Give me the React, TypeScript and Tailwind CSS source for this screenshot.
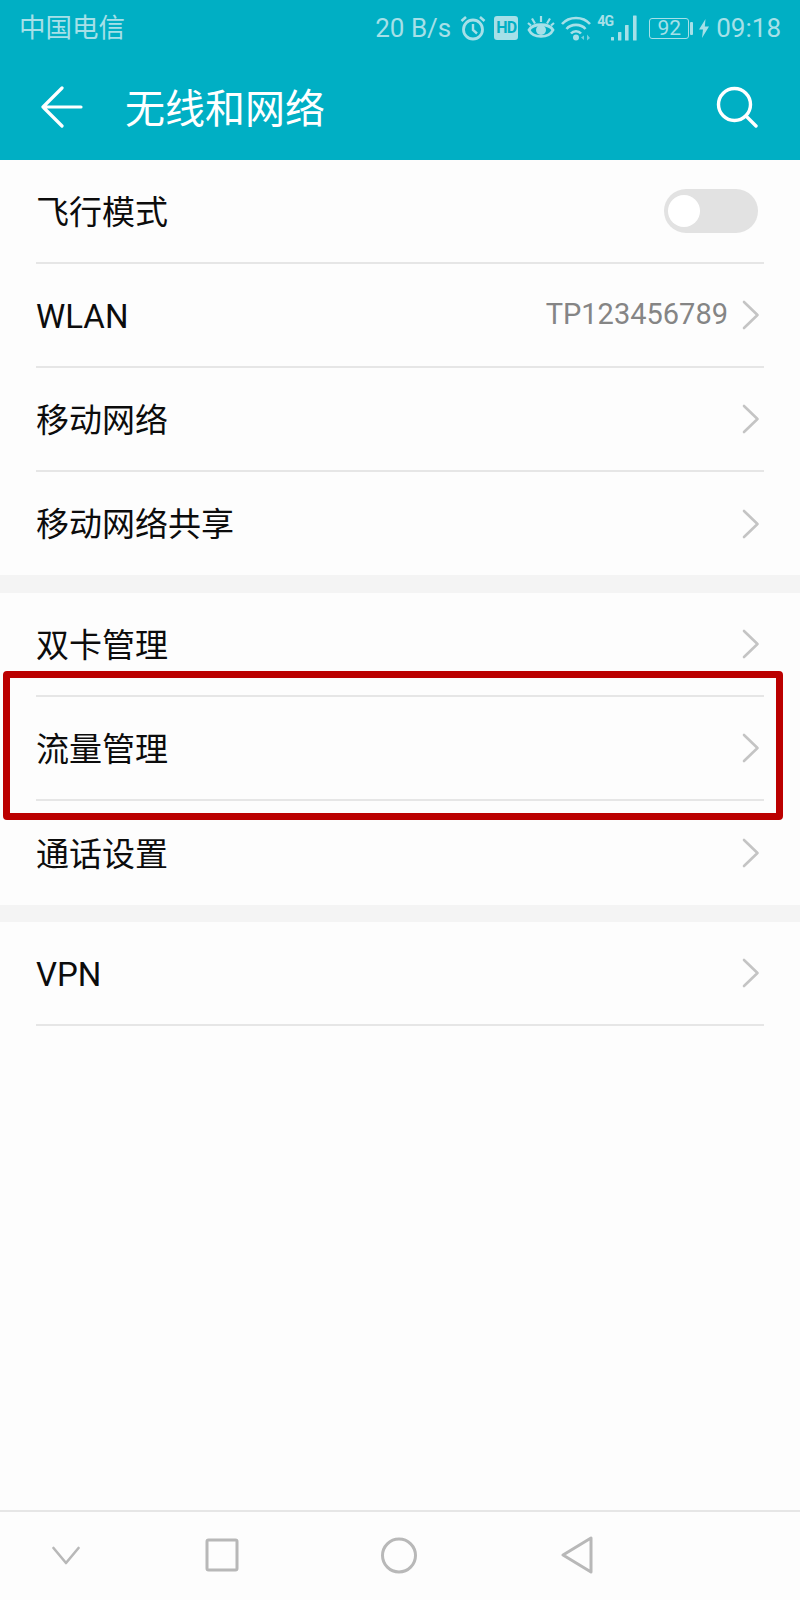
import React from 'react';

const FONT = 'font-["Roboto","Noto_Sans_CJK_SC",sans-serif]';

const Chevron = () => (
  <svg width="18" height="30" viewBox="0 0 18 30" fill="none" className="shrink-0">
    <path d="M2 2 L15.5 15 L2 28" stroke="#c4c4c4" strokeWidth="2.6" strokeLinecap="round" strokeLinejoin="round" />
  </svg>
);

const Row = ({ label, value, divider = true, short = false, children }: { label: string; value?: string; divider?: boolean; short?: boolean; children?: React.ReactNode }) => (
  <div className="pl-9 pr-9">
    <div className={`${short ? 'h-[103px]' : 'h-[104px]'} flex items-center justify-between ${divider ? 'border-b-2 border-[#e6e6e6]' : ''}`}>
      <span className="text-[33px] text-[#0c0c0c] leading-none pt-[2px]">{label}</span>
      {children ?? (
        <div className="flex items-center mr-[4px]">
          {value && <span className="text-[29px] text-[#858585] mr-[14px]">{value}</span>}
          <Chevron />
        </div>
      )}
    </div>
  </div>
);

const StatusIcons = () => (
  <div className="flex items-center">
    {/* alarm */}
    <svg width="26" height="26" viewBox="0 0 26 26" fill="none" stroke="currentColor" className="ml-[9px]">
      <circle cx="13" cy="14.5" r="9.5" strokeWidth="2.8" />
      <path d="M13 9 V15 L17 18.5" strokeWidth="2.4" />
      <path d="M1.5 6 L6 2 M24.5 6 L20 2" strokeWidth="2.6" />
    </svg>
    {/* HD */}
    <span className="ml-[8px] w-[24px] h-[24px] rounded-[3px] bg-[#a6e0e8] text-[#00afc4] text-[16px] font-bold leading-[24px] text-center tracking-tighter">HD</span>
    {/* eye */}
    <svg width="28" height="26" viewBox="0 0 28 26" fill="none" stroke="currentColor" className="ml-[9px]">
      <path d="M2 15 C6 8 22 8 26 15 C22 23.5 6 23.5 2 15 Z" strokeWidth="2.8" />
      <circle cx="14" cy="15" r="5" fill="currentColor" stroke="none" />
      <path d="M14 1 V7 M5 3.5 L8 8.5 M23 3.5 L20 8.5 M1 8 L4 10.5 M27 8 L24 10.5" strokeWidth="2.2" />
    </svg>
    {/* wifi */}
    <svg width="30" height="26" viewBox="0 0 30 26" fill="none" stroke="currentColor" className="ml-[6px]">
      <path d="M1 9 C8 1 22 1 29 9 M5.5 14 C10 8.5 20 8.5 24.5 14 M10 18.5 C12.5 15.5 17.5 15.5 20 18.5" strokeWidth="2.6" />
      <circle cx="15" cy="22.5" r="3" fill="currentColor" stroke="none" />
      <path d="M20 22.5 L23 20.5 V25 Z M26 19.5 L29 23 L26 25.5 Z" fill="currentColor" stroke="none" opacity="0.7" />
    </svg>
    {/* 4G + signal */}
    <div className="relative w-[40px] h-[26px] ml-[6px]">
      <span className="absolute left-0 top-[-2px] text-[14px] font-bold leading-[16px] tracking-tighter">4G</span>
      <svg width="26" height="26" viewBox="0 0 26 26" fill="currentColor" className="absolute right-0 top-0">
        <rect x="0" y="22" width="3" height="3.5" rx="0.5" />
        <rect x="7" y="17" width="3.4" height="8.5" rx="0.5" />
        <rect x="14" y="10" width="3.6" height="15.5" rx="0.5" />
        <rect x="22" y="0.5" width="3.6" height="25" rx="0.5" />
      </svg>
    </div>
    {/* battery */}
    <div className="ml-[12px] w-[40px] h-[21px] border border-current rounded-[3px] flex items-center justify-center text-[21px] leading-none">92</div>
    <div className="ml-[1px] w-[3px] h-[13px] bg-current rounded-[1px]" />
    {/* charging */}
    <svg width="10" height="19" viewBox="0 0 10 19" fill="currentColor" className="ml-[6px]">
      <path d="M6.5 0 L0 10.5 H4 L3 19 L10 7.5 H5.8 Z" />
    </svg>
    <span className="ml-[7px] text-[26px] leading-none">09:18</span>
  </div>
);

const NavBar = () => (
  <div className="h-[90px] border-t-2 border-[#e6e6e6] flex items-center pb-[2px]">
    <div className="flex items-center pl-[52px]">
      <svg width="28" height="24" viewBox="0 0 28 24" fill="none" stroke="#b8b8b8" strokeWidth="2.6" strokeLinecap="round" strokeLinejoin="round">
        <path d="M1.5 5 L14 20 L26.5 5" />
      </svg>
      <svg width="34" height="34" viewBox="0 0 34 34" fill="none" stroke="#b8b8b8" strokeWidth="3" className="ml-[125px]">
        <rect x="2" y="2" width="30" height="30" rx="1.5" />
      </svg>
      <svg width="36" height="37" viewBox="0 0 36 37" fill="none" stroke="#b8b8b8" strokeWidth="3" className="ml-[142px]">
        <circle cx="18" cy="18.5" r="16.5" />
      </svg>
      <svg width="32" height="38" viewBox="0 0 32 38" fill="none" stroke="#b8b8b8" strokeWidth="3" strokeLinejoin="round" className="ml-[144px]">
        <path d="M30 2 V36 L2 19 Z" />
      </svg>
    </div>
  </div>
);

export default function App() {
  return (
    <div className={`w-[800px] h-[1600px] bg-[#fdfdfd] flex flex-col relative overflow-hidden ${FONT}`}>
      {/* Header */}
      <div className="h-[160px] bg-[#00afc4] shrink-0 flex flex-col">
        <div className="h-[56px] pl-[19px] pr-[19px] flex items-center justify-between text-[#a6e0e8]">
          <span className="text-[26.5px] leading-none">中国电信</span>
          <div className="flex items-center">
            <span className="text-[26px] leading-none">20 B/s</span>
            <StatusIcons />
          </div>
        </div>
        <div className="flex-1 flex items-center pl-[41px] pr-[42px] pb-[2px] text-white">
          <svg width="42" height="42" viewBox="0 0 42 42" fill="none" stroke="white" strokeWidth="3.2" strokeLinecap="round" strokeLinejoin="round">
            <path d="M40 21 H2 M21 2 L2 21 L21 40" />
          </svg>
          <span className="ml-[42px] text-[40px] leading-none pt-[5px]">无线和网络</span>
          <svg width="42" height="42" viewBox="0 0 42 42" fill="none" stroke="white" strokeWidth="3.4" strokeLinecap="round" className="ml-auto">
            <circle cx="18.5" cy="18.5" r="16" />
            <path d="M30 30 L40 40" />
          </svg>
        </div>
      </div>

      {/* Settings list */}
      <div>
        <Row label="飞行模式">
          <div className="w-[94px] h-[44px] rounded-full bg-[#e2e2e2] flex items-center pl-1 mr-[6px] shrink-0">
            <div className="w-8 h-8 rounded-full bg-white" />
          </div>
        </Row>
        <Row label="WLAN" value="TP123456789" />
        <Row label="移动网络" />
        <Row label="移动网络共享" divider={false} short />
        <div className="h-[18px] bg-[#f4f4f4]" />
        <Row label="双卡管理" />
        <Row label="流量管理" />
        <Row label="通话设置" divider={false} />
        <div className="h-[17px] bg-[#f4f4f4]" />
        <Row label="VPN" />
      </div>

      <div className="flex-1" />
      <NavBar />

      {/* Highlight box */}
      <div className="absolute left-[3px] top-[671px] w-[780px] h-[149px] border-[7px] border-[#bb0000] rounded-[4px]" />
    </div>
  );
}
